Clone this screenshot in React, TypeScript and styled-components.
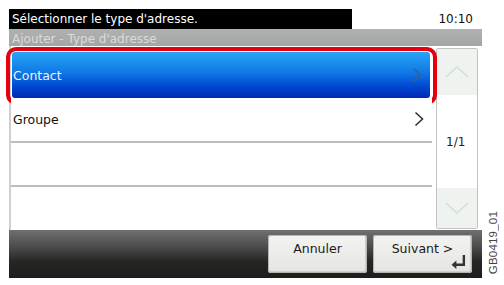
import React from "react";
import styled, { createGlobalStyle } from "styled-components";

const GlobalStyle = createGlobalStyle`
  html, body {
    margin: 0;
    padding: 0;
    background: #ffffff;
  }
  body {
    font-family: "DejaVu Sans", Verdana, sans-serif;
  }
`;

const Page = styled.div`
  display: flex;
  padding: 9px 0 0 9px;
  width: 504px;
  height: 285px;
  box-sizing: border-box;
`;

const Panel = styled.div`
  display: flex;
  flex-direction: column;
  width: 473px;
  height: 269px;
`;

const TopBar = styled.div`
  display: flex;
  height: 20px;
`;

const Title = styled.div`
  width: 343px;
  background: #000;
  color: #fff;
  font-size: 12px;
  line-height: 20px;
  padding-left: 3px;
  box-sizing: border-box;
  white-space: nowrap;
`;

const Clock = styled.div`
  flex: 1;
  text-align: right;
  padding-right: 9px;
  font-size: 12px;
  line-height: 20px;
  color: #111;
`;

const SubTitle = styled.div`
  height: 17px;
  overflow: hidden;
  background: linear-gradient(#b0b2b2, #a4a6a6);
  color: #d9dbdb;
  font-size: 12px;
  line-height: 20px;
  padding-left: 3px;
  white-space: nowrap;
`;

const Main = styled.div`
  display: flex;
  height: 184px;
`;

const List = styled.div`
  display: flex;
  flex-direction: column;
  width: 423px;
  padding-top: 6px;
  box-sizing: border-box;
  border-left: 2px solid #cfcfcf;
`;

const Row = styled.div<{ $selected?: boolean; $last?: boolean }>`
  position: relative;
  display: flex;
  align-items: center;
  justify-content: space-between;
  font-size: 12.5px;
  box-sizing: border-box;
  padding: 0 8px 0 ${(p) => (p.$selected ? "1px" : "2px")};
  ${(p) =>
    p.$selected
      ? `
    height: 46px;
    margin: 0 2px 0 1px;
    border-radius: 3px;
    color: #e8f4ff;
    background: linear-gradient(#29a4f4 0%, #0f78e6 45%, #0048d0 75%, #0028b4 100%);
    &::after {
      content: "";
      position: absolute;
      left: -6px;
      right: -7px;
      top: -5px;
      bottom: -7px;
      border: 4px solid #e5000f;
      border-radius: 10px;
      pointer-events: none;
    }
  `
      : `
    flex: 1;
    color: #111;
    background: #fff;
    border-bottom: ${p.$last ? "none" : "2px solid #bdbdbd"};
  `}
`;

const Chevron = styled.svg`
  width: 10px;
  height: 16px;
  flex-shrink: 0;
`;

const Scroller = styled.div`
  display: flex;
  flex-direction: column;
  width: 42px;
  margin: 2px 4px 1px 4px;
  border: 1px solid #c2c2c2;
  border-radius: 2px;
  box-sizing: border-box;
  background: #fff;
`;

const ScrollButton = styled.div<{ $height: number }>`
  display: flex;
  align-items: center;
  justify-content: center;
  height: ${(p) => p.$height}px;
  background: #eef3f0;
`;

const PageCount = styled.div`
  flex: 1;
  display: flex;
  align-items: center;
  padding-left: 9px;
  font-size: 12px;
  color: #222;
`;

const BottomBar = styled.div`
  display: flex;
  justify-content: flex-end;
  gap: 6px;
  height: 48px;
  padding: 5px 10px 5px 0;
  box-sizing: border-box;
  background: linear-gradient(#707070 0%, #4c4c4c 35%, #262724 65%, #1c1e1a 100%);
`;

const ActionButton = styled.div`
  position: relative;
  width: 99px;
  height: 38px;
  box-sizing: border-box;
  padding-top: 6px;
  text-align: center;
  font-size: 12.5px;
  color: #1a1a1a;
  border-radius: 3px;
  background: linear-gradient(#f3f3f1, #e4e4e1);
  box-shadow: inset 0 0 0 1px #b5b5b2, inset -1px -1px 0 1px #d0d0cd;
`;

const EnterIcon = styled.svg`
  position: absolute;
  right: 6px;
  bottom: 4px;
  width: 15px;
  height: 15px;
`;

const SideLabel = styled.div`
  align-self: flex-end;
  margin: 0 0 11px 5px;
  writing-mode: vertical-rl;
  transform: rotate(180deg);
  font-family: "Liberation Sans", Arial, sans-serif;
  font-size: 11.5px;
  color: #444;
  letter-spacing: 0.2px;
`;

const RightArrow = ({ color }: { color: string }) => (
  <Chevron viewBox="0 0 10 16">
    <polyline points="1.5,1.5 8.5,8 1.5,14.5" fill="none" stroke={color} strokeWidth="1.6" />
  </Chevron>
);

const App: React.FC = () => {
  return (
    <>
      <GlobalStyle />
      <Page>
        <Panel>
          <TopBar>
            <Title>Sélectionner le type d'adresse.</Title>
            <Clock>10:10</Clock>
          </TopBar>
          <SubTitle>Ajouter - Type d'adresse</SubTitle>
          <Main>
            <List>
              <Row $selected>
                Contact
                <RightArrow color="#3d5d8c" />
              </Row>
              <Row>
                Groupe
                <RightArrow color="#333" />
              </Row>
              <Row />
              <Row $last />
            </List>
            <Scroller>
              <ScrollButton $height={46}>
                <svg width="26" height="14" viewBox="0 0 26 14">
                  <polyline points="2,12 13,2 24,12" fill="none" stroke="#d6dcd9" strokeWidth="1.5" />
                </svg>
              </ScrollButton>
              <PageCount>1/1</PageCount>
              <ScrollButton $height={40}>
                <svg width="26" height="14" viewBox="0 0 26 14">
                  <polyline points="2,2 13,12 24,2" fill="none" stroke="#d6dcd9" strokeWidth="1.5" />
                </svg>
              </ScrollButton>
            </Scroller>
          </Main>
          <BottomBar>
            <ActionButton>Annuler</ActionButton>
            <ActionButton>
              Suivant &gt;
              <EnterIcon viewBox="0 0 14 14">
                <polyline points="12,1 12,10 3.5,10" fill="none" stroke="#333" strokeWidth="2.2" />
                <polygon points="0.5,10 5,6 5,14" fill="#333" />
              </EnterIcon>
            </ActionButton>
          </BottomBar>
        </Panel>
        <SideLabel>GB0419_01</SideLabel>
      </Page>
    </>
  );
};

export default App;
